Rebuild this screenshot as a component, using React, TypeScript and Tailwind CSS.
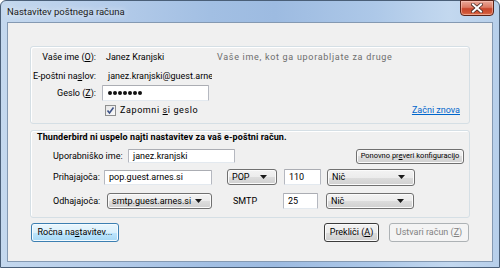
import React from "react";

const btn =
  "flex items-center justify-center rounded-[3px] border bg-[linear-gradient(180deg,#f3f3f3_0%,#ececec_50%,#dddddd_50%,#d0d0d0_100%)] shadow-[inset_0_0_0_1px_#fbfbfb]";
const input =
  "bg-white border border-[#b5b8c0] border-t-[#abadb3] border-b-[#e3e9ef] rounded-[1px] flex items-center";

function Arrow() {
  return (
    <svg width="7" height="4" viewBox="0 0 7 4" className="shrink-0">
      <path d="M0 0H7L3.5 4Z" fill="#1a1a1a" />
    </svg>
  );
}

function Select({ w, h, text }: { w: string; h: string; text: string }) {
  return (
    <div className={`${btn} ${w} ${h} border-[#707070] !justify-between pl-[4px] pr-[9px]`}>
      <span className="whitespace-nowrap">{text}</span>
      <Arrow />
    </div>
  );
}

export default function App() {
  return (
    <div className="w-[500px] h-[268px] overflow-hidden font-['Roboto',sans-serif] text-[9px] leading-none text-black">
      <div className="relative w-full h-full rounded-t-[6px] border border-[#4a5f78] bg-[linear-gradient(90deg,#c4d8ee_0%,#b6cdea_20%,#a2bfe3_42%,#9dbbe1_55%,#adc8e8_75%,#c3d8ef_90%,#b7cfea_100%)] flex flex-col pl-[6px] pr-[6px] pb-[5px]">
        {/* title bar */}
        <div className="h-[21px] flex items-center shrink-0">
          <span className="text-[9.5px] text-[#1b1b1b] [text-shadow:0_0_6px_#ffffff]">Nastavitev poštnega računa</span>
        </div>
        {/* close button */}
        <div className="absolute top-[-1px] right-[5px] w-[34px] h-[16px] rounded-b-[4px] border border-[#5a2318] bg-[linear-gradient(180deg,#eaa999_0%,#dc7a64_45%,#c8462c_55%,#d05637_85%,#e07a55_100%)] shadow-[inset_0_0_0_1px_rgba(255,210,200,0.5)] flex items-center justify-center">
          <svg width="12" height="10" viewBox="0 0 12 10">
            <path d="M2 1.5L10 8.5M10 1.5L2 8.5" stroke="#4a2a24" strokeWidth="3.6" strokeLinecap="square" />
            <path d="M2 1.5L10 8.5M10 1.5L2 8.5" stroke="#ffffff" strokeWidth="2" strokeLinecap="square" />
          </svg>
        </div>

        {/* client area */}
        <div className="flex-1 bg-[#f0f0f0] border border-[#8499b2] flex flex-col px-[22px] pt-[23px]">
          {/* upper group */}
          <div className="h-[78px] shrink-0 border border-[#d5dfe5] rounded-[3px] shadow-[inset_1px_1px_0_#ffffff] flex flex-col pb-[3px]">
            <div className="h-[20px] flex items-center">
              <div className="w-[65px] text-right whitespace-nowrap">
                <span>Vaše ime (<span className="underline">O</span>):</span>
              </div>
              <div className="w-[110px] ml-[6px] pl-[4px] whitespace-nowrap">Janez Kranjski</div>
              <div className="ml-[5px] text-[#6d6d6d] whitespace-nowrap tracking-[0.7px]">Vaše ime, kot ga uporabljate za druge</div>
            </div>
            <div className="h-[18px] flex items-center">
              <div className="w-[65px] text-right whitespace-nowrap">
                <span>E-poštni na<span className="underline">s</span>lov:</span>
              </div>
              <div className="w-[110px] ml-[6px] pl-[6px] whitespace-nowrap overflow-hidden leading-[14px]">janez.kranjski@guest.arnes.si</div>
            </div>
            <div className="h-[16px] flex items-center">
              <div className="w-[65px] text-right whitespace-nowrap">
                <span>Geslo (<span className="underline">Z</span>):</span>
              </div>
              <div className={`${input} ml-[6px] w-[107px] h-[16px] pl-[5px] gap-[1px]`}>
                {[0, 1, 2, 3, 4, 5, 6].map((i) => (
                  <span key={i} className="w-[4px] h-[4px] rounded-full bg-[#111]" />
                ))}
              </div>
            </div>
            <div className="h-[18px] flex items-center pl-[74px] pr-[9px]">
              <div className="w-[11px] h-[11px] border border-[#8e8f8f] bg-[linear-gradient(135deg,#e6e6e6,#fafafa)] flex items-center justify-center">
                <svg width="9" height="9" viewBox="0 0 9 9">
                  <path d="M1.5 4.5L3.5 7L7.5 1.5" stroke="#3f5488" strokeWidth="1.6" fill="none" />
                </svg>
              </div>
              <div className="ml-[4px] whitespace-nowrap tracking-[0.6px]">
                <span>Zapomni <span className="underline">s</span>i geslo</span>
              </div>
              <div className="flex-1" />
              <div className="text-[#0066cc] underline whitespace-nowrap">Začni znova</div>
            </div>
          </div>

          {/* lower group */}
          <div className="mt-[6px] h-[88px] shrink-0 border border-[#d5dfe5] rounded-[3px] shadow-[inset_1px_1px_0_#ffffff] flex flex-col pb-[6px]">
            <div className="h-[13px] flex items-center pl-[6px] font-bold whitespace-nowrap tracking-[0.1px]">
              Thunderbird ni uspelo najti nastavitev za vaš e-poštni račun.
            </div>
            <div className="mt-[4px] h-[16px] flex items-center pl-[22px] pr-[5px]">
              <div className="w-[75px] whitespace-nowrap">Uporabniško ime:</div>
              <div className={`${input} w-[107px] h-[14px] pl-[4px]`}>janez.kranjski</div>
              <div className="flex-1" />
              <div className={`${btn} w-[108px] h-[15px] border-[#707070] text-[7.5px]`}>
                <span className="whitespace-nowrap">
                  Ponovno pr<span className="underline">e</span>veri konfiguracijo
                </span>
              </div>
            </div>
            <div className="mt-[4px] h-[18px] flex items-center pl-[22px]">
              <div className="w-[51px] whitespace-nowrap">Prihajajoča:</div>
              <div className={`${input} w-[108px] h-[15px] pl-[4px]`}>pop.guest.arnes.si</div>
              <div className="ml-[15px]">
                <Select w="w-[50px]" h="h-[16px]" text="POP" />
              </div>
              <div className={`${input} ml-[7px] w-[37px] h-[16px] pl-[4px]`}>110</div>
              <div className="ml-[6px]">
                <Select w="w-[88px]" h="h-[17px]" text="Nič" />
              </div>
            </div>
            <div className="mt-[6px] h-[18px] flex items-center pl-[22px]">
              <div className="w-[54px] whitespace-nowrap">Odhajajoča:</div>
              <Select w="w-[105px]" h="h-[16px]" text="smtp.guest.arnes.si" />
              <div className="w-[71px] pl-[21px]">SMTP</div>
              <div className={`${input} w-[35px] h-[16px] pl-[4px]`}>25</div>
              <div className="ml-[8px]">
                <Select w="w-[88px]" h="h-[16px]" text="Nič" />
              </div>
            </div>
          </div>

          {/* buttons */}
          <div className="mt-[5px] h-[19px] flex items-center px-[1px]">
            <div className="w-[88px] h-[19px] flex items-center justify-center rounded-[3px] border border-[#3c7fb1] bg-[linear-gradient(180deg,#eaf6fd_0%,#d9f0fc_50%,#bee6fd_50%,#a7d9f5_100%)] shadow-[inset_0_0_0_1px_#f4fbff]">
              <span className="whitespace-nowrap">
                Ročna na<span className="underline">s</span>tavitev...
              </span>
            </div>
            <div className="flex-1" />
            <div className={`${btn} w-[55px] h-[19px] border-[#3c3c3c]`}>
              <span className="whitespace-nowrap">
                Prekliči (<span className="underline">A</span>)
              </span>
            </div>
            <div className="ml-[10px] w-[80px] h-[19px] flex items-center justify-center rounded-[3px] border border-[#adb2b5] bg-[#f4f4f4] text-[#838383]">
              <span className="whitespace-nowrap">
                Ustvari račun (<span className="underline">Z</span>)
              </span>
            </div>
          </div>
        </div>
      </div>
    </div>
  );
}
